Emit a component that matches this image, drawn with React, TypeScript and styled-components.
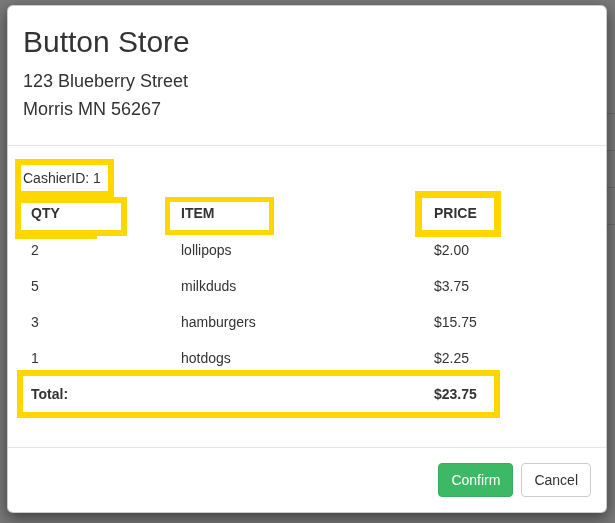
import React from "react";
import styled, { createGlobalStyle } from "styled-components";

const GlobalStyle = createGlobalStyle`
  html, body {
    margin: 0;
    padding: 0;
    background: #ffffff;
  }
  body {
    font-family: "Liberation Sans", Arial, Helvetica, sans-serif;
    font-size: 14px;
    line-height: 20px;
    color: #333333;
    overflow: hidden;
  }
  * { box-sizing: border-box; }
`;

const PageBehind = styled.div`
  padding: 113px 0 0 24px;
  width: 100%;
`;

const BehindRow = styled.div`
  height: 37px;
  border-top: 1px solid #dddddd;
`;

const Backdrop = styled.div`
  position: fixed;
  inset: 0;
  background: rgba(0, 0, 0, 0.53);
`;

const ModalLayer = styled.div`
  position: fixed;
  inset: 0;
  overflow: hidden;
`;

const Dialog = styled.div`
  width: 600px;
  margin: 5px 0 0 7px;
  background: #ffffff;
  border: 1px solid rgba(0, 0, 0, 0.2);
  border-radius: 6px;
  box-shadow: 0 5px 15px rgba(0, 0, 0, 0.5);
`;

const Header = styled.div`
  padding: 15px;
  border-bottom: 1px solid #e5e5e5;
`;

const Title = styled.h2`
  margin: 4px 0 0;
  font-size: 30px;
  line-height: 33px;
  font-weight: 500;
  color: #333333;
`;

const Address = styled.div`
  margin: 9px 0 7px;
  font-size: 18px;
  line-height: 28px;
`;

const Body = styled.div`
  padding: 15px;
`;

const Cashier = styled.div`
  display: inline-block;
  margin: 4px 0 0 -2px;
  padding: 3px 7px 3px 2px;
  line-height: 20px;
  outline: 6px solid #ffd700;
`;

const Table = styled.div`
  width: 471px;
  margin: 4px 0 20px;
`;

const Row = styled.div<{ $head?: boolean; $total?: boolean }>`
  display: grid;
  grid-template-columns: 150px 253px 68px;
  height: ${(p) => (p.$head ? "37px" : "36px")};
  align-items: ${(p) => (p.$head ? "end" : "center")};
  padding-bottom: ${(p) => (p.$head ? "2px" : "0")};
  font-weight: ${(p) => (p.$head || p.$total ? "bold" : "normal")};
  outline: ${(p) => (p.$total ? "6px solid #ffd700" : "none")};
`;

const Cell = styled.div`
  padding: 0 8px;
  line-height: 20px;
  white-space: nowrap;
`;

const HeadLabel = styled.div<{ $dx: number; $w: number; $top: number; $ring: number; $tail?: boolean }>`
  position: relative;
  width: ${(p) => p.$w}px;
  margin-left: ${(p) => p.$dx}px;
  padding: ${(p) => p.$top}px 0 7px ${(p) => 8 - p.$dx}px;
  line-height: 20px;
  outline: ${(p) => p.$ring}px solid #ffd700;
  white-space: nowrap;
  &::after {
    content: "";
    display: ${(p) => (p.$tail ? "block" : "none")};
    position: absolute;
    left: -${(p) => p.$ring}px;
    bottom: -${(p) => p.$ring + 3}px;
    width: 82px;
    height: 3px;
    background: #ffd700;
  }
`;

const Footer = styled.div`
  padding: 15px;
  border-top: 1px solid #e5e5e5;
  display: flex;
  justify-content: flex-end;
  gap: 8px;
`;

const Button = styled.button<{ $variant: "success" | "default" }>`
  font-family: "Liberation Sans", Arial, Helvetica, sans-serif;
  font-size: 14px;
  line-height: 20px;
  padding: 6px 12px;
  border-radius: 4px;
  border: 1px solid ${(p) => (p.$variant === "success" ? "#37ad5e" : "#cccccc")};
  background: ${(p) => (p.$variant === "success" ? "#3db865" : "#ffffff")};
  color: ${(p) => (p.$variant === "success" ? "#ffffff" : "#333333")};
  cursor: pointer;
`;

const items = [
  { qty: 2, name: "lollipops", price: "$2.00" },
  { qty: 5, name: "milkduds", price: "$3.75" },
  { qty: 3, name: "hamburgers", price: "$15.75" },
  { qty: 1, name: "hotdogs", price: "$2.25" },
];

export default function App() {
  return (
    <>
      <GlobalStyle />
      <PageBehind>
        <BehindRow />
        <BehindRow />
        <BehindRow />
        <BehindRow />
      </PageBehind>
      <Backdrop />
      <ModalLayer>
        <Dialog>
          <Header>
            <Title>Button Store</Title>
            <Address>
              <div>123 Blueberry Street</div>
              <div>Morris MN 56267</div>
            </Address>
          </Header>
          <Body>
            <Cashier>CashierID: 1</Cashier>
            <Table>
              <Row $head>
                <HeadLabel $dx={-2} $w={100} $top={0} $ring={6} $tail>
                  QTY
                </HeadLabel>
                <HeadLabel $dx={-3} $w={99} $top={1} $ring={5}>
                  ITEM
                </HeadLabel>
                <HeadLabel $dx={-4} $w={72} $top={5} $ring={7}>
                  PRICE
                </HeadLabel>
              </Row>
              {items.map((it) => (
                <Row key={it.name}>
                  <Cell>{it.qty}</Cell>
                  <Cell>{it.name}</Cell>
                  <Cell>{it.price}</Cell>
                </Row>
              ))}
              <Row $total>
                <Cell>Total:</Cell>
                <Cell />
                <Cell>$23.75</Cell>
              </Row>
            </Table>
          </Body>
          <Footer>
            <Button $variant="success">Confirm</Button>
            <Button $variant="default">Cancel</Button>
          </Footer>
        </Dialog>
      </ModalLayer>
    </>
  );
}
